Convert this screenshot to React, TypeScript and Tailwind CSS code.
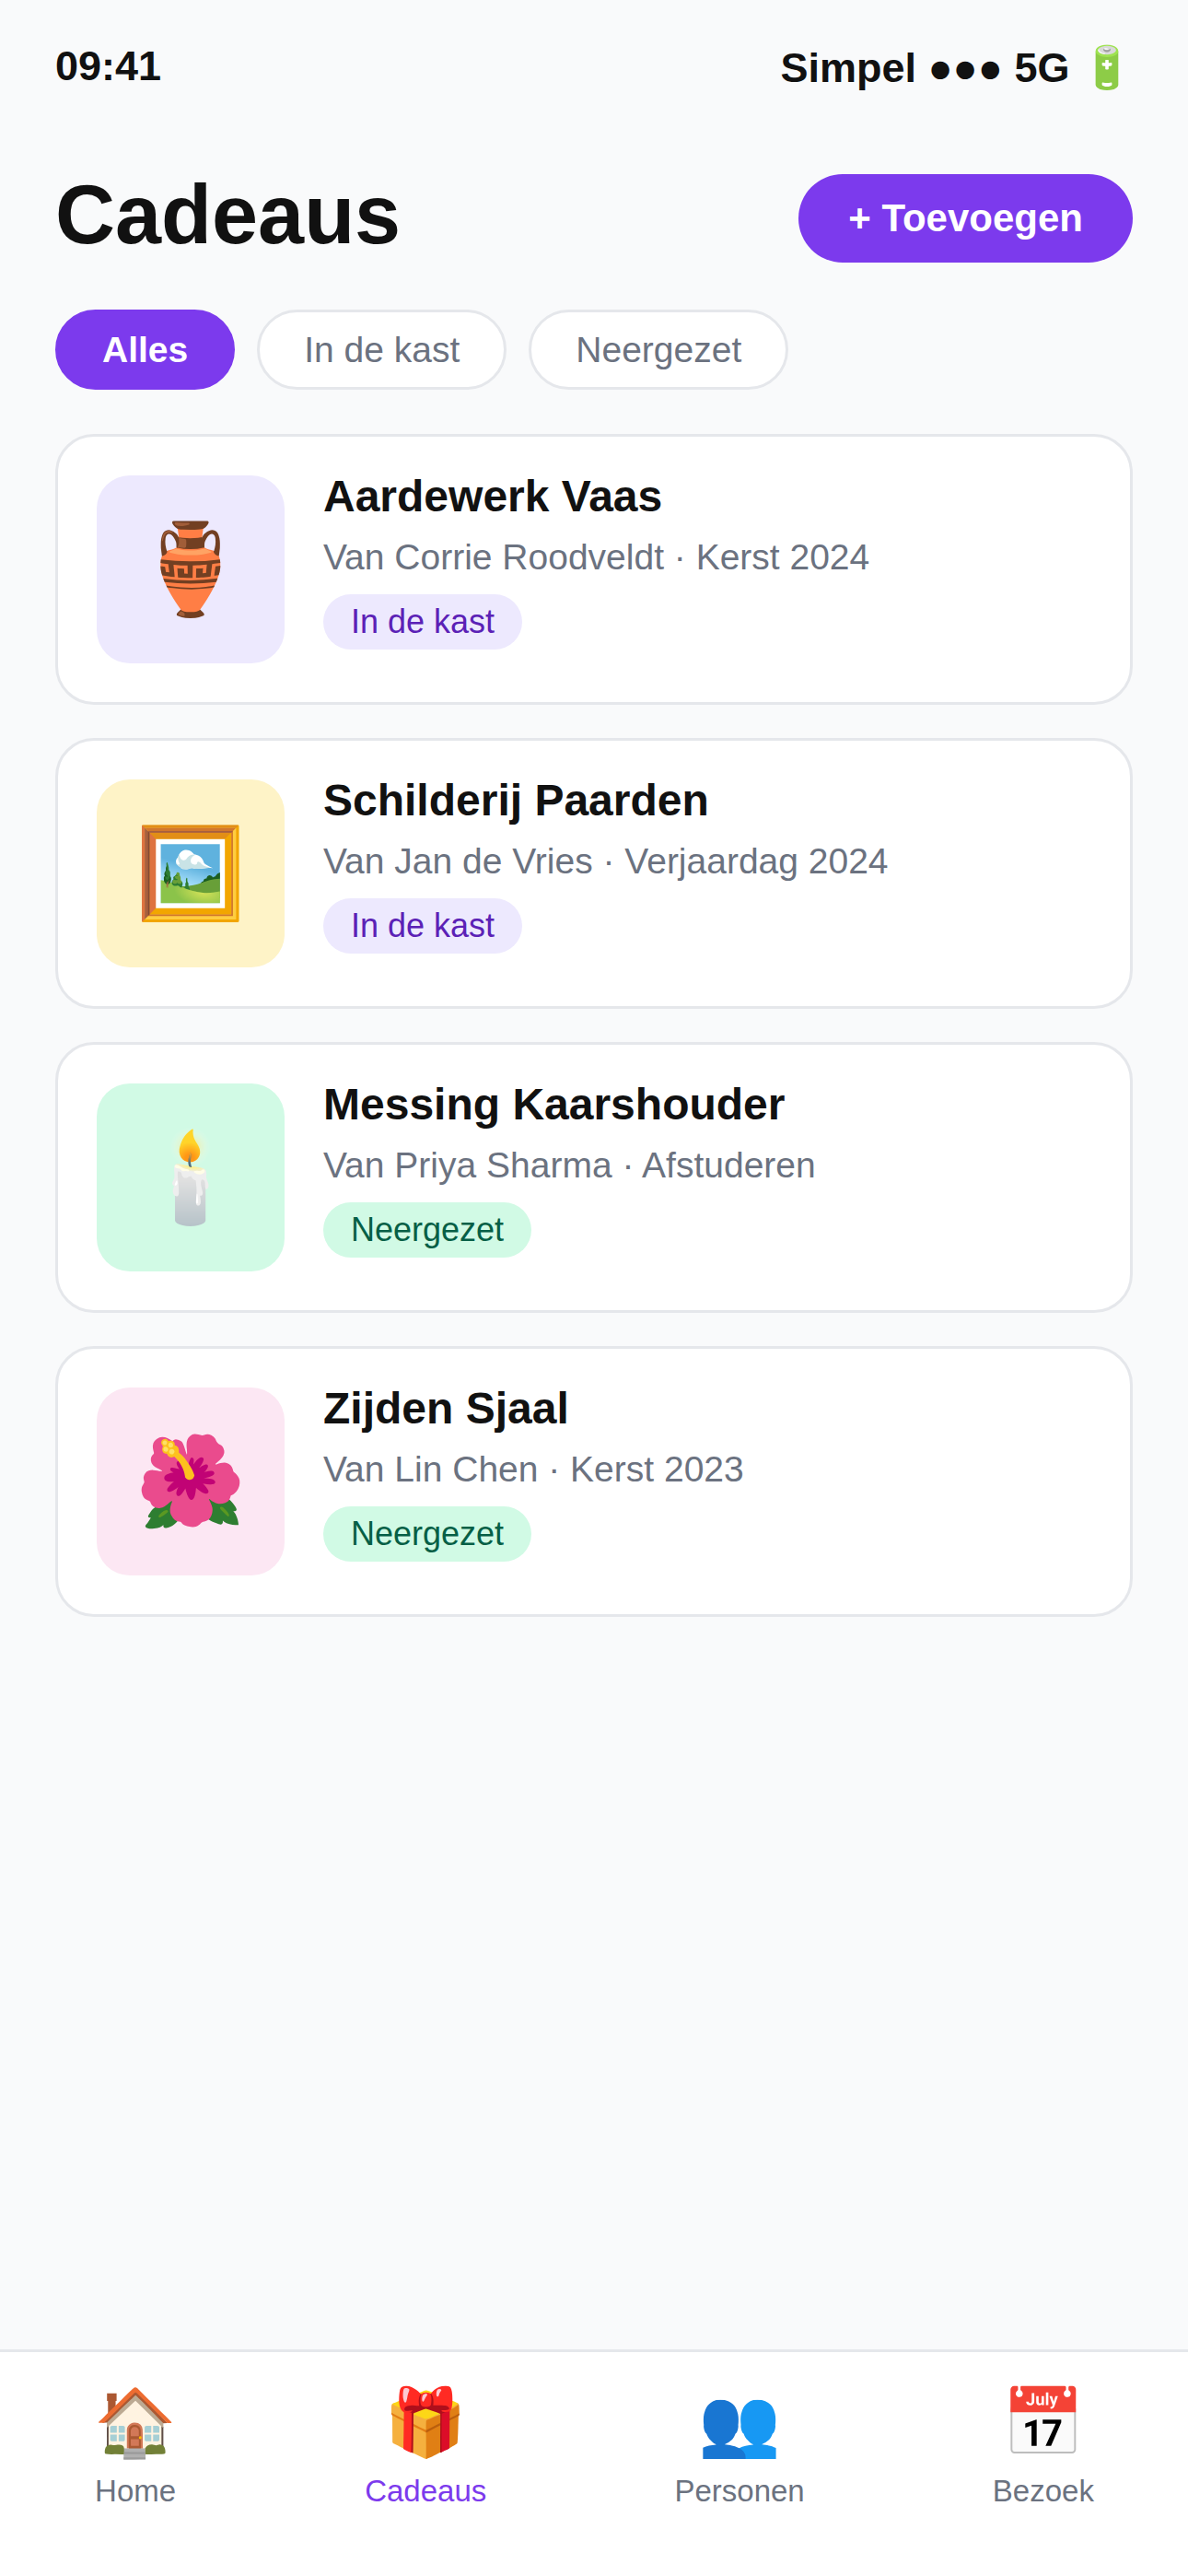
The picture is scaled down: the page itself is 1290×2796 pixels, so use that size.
const gifts = [
  { icon: '🏺', name: 'Aardewerk Vaas', info: 'Van Corrie Roodveldt · Kerst 2024', status: 'In de kast', tile: 'bg-[#ede9fe]', tag: 'bg-[#ede9fe] text-[#5b21b6]' },
  { icon: '🖼️', name: 'Schilderij Paarden', info: 'Van Jan de Vries · Verjaardag 2024', status: 'In de kast', tile: 'bg-[#fef3c7]', tag: 'bg-[#ede9fe] text-[#5b21b6]' },
  { icon: '🕯️', name: 'Messing Kaarshouder', info: 'Van Priya Sharma · Afstuderen', status: 'Neergezet', tile: 'bg-[#d1fae5]', tag: 'bg-[#d1fae5] text-[#065f46]' },
  { icon: '🌺', name: 'Zijden Sjaal', info: 'Van Lin Chen · Kerst 2023', status: 'Neergezet', tile: 'bg-[#fce7f3]', tag: 'bg-[#d1fae5] text-[#065f46]' },
];

const tabs = [
  { icon: '🏠', label: 'Home' },
  { icon: '🎁', label: 'Cadeaus', active: true },
  { icon: '👥', label: 'Personen' },
  { icon: '📅', label: 'Bezoek' },
];

export default function App() {
  return (
    <div className="flex min-h-screen flex-col bg-[#f9fafb] font-['Liberation_Sans',Arial,sans-serif] text-[#111111]">
      <div className="flex h-[141px] items-start justify-between px-[60px] pt-[45px] text-[45px] font-bold">
        <span className="leading-[53px]">09:41</span>
        <span className="leading-[58px]">Simpel ●●● 5G 🔋</span>
      </div>
      <header className="flex items-start justify-between px-[60px] pt-12">
        <h1 className="text-[90px] leading-[88px] font-bold">Cadeaus</h1>
        <button className="h-24 rounded-full bg-[#7c3aed] px-[54px] text-[42px] leading-[48px] font-bold text-white">+ Toevoegen</button>
      </header>
      <div className="flex gap-6 px-[60px] pt-[51px]">
        <button className="rounded-full border-3 border-[#7c3aed] bg-[#7c3aed] px-12 py-[18px] text-[39px] leading-[45px] font-bold text-white">Alles</button>
        <button className="rounded-full border-3 border-[#e5e7eb] bg-white px-12 py-[18px] text-[39px] leading-[45px] text-[#6b7280]">In de kast</button>
        <button className="rounded-full border-3 border-[#e5e7eb] bg-white px-12 py-[18px] text-[39px] leading-[45px] text-[#6b7280]">Neergezet</button>
      </div>
      <main className="flex flex-1 flex-col gap-9 px-[60px] py-12">
        {gifts.map((g) => (
          <article key={g.name} className="flex gap-[42px] rounded-[42px] border-3 border-[#e5e7eb] bg-white p-[42px]">
            <div className={`flex size-[204px] shrink-0 items-center justify-center rounded-[36px] text-[96px] leading-[112px] ${g.tile}`}>{g.icon}</div>
            <div className="flex flex-col items-start">
              <h2 className="text-[48px] leading-[45px] font-bold">{g.name}</h2>
              <p className="mt-[21px] text-[39px] leading-[45px] text-[#6b7280]">{g.info}</p>
              <span className={`mt-[18px] rounded-full px-[30px] py-[9px] text-[36px] leading-[42px] ${g.tag}`}>{g.status}</span>
            </div>
          </article>
        ))}
      </main>
      <nav className="flex h-[246px] justify-around border-t-3 border-[#e5e7eb] bg-white pt-9">
        {tabs.map((t) => (
          <a key={t.label} href="#" className={`flex flex-col items-center gap-[15px] text-[33px] leading-[38px] ${t.active ? 'text-[#7c3aed]' : 'text-[#6b7280]'}`}>
            <span className="text-[72px] leading-[81px]">{t.icon}</span>
            {t.label}
          </a>
        ))}
      </nav>
    </div>
  );
}
